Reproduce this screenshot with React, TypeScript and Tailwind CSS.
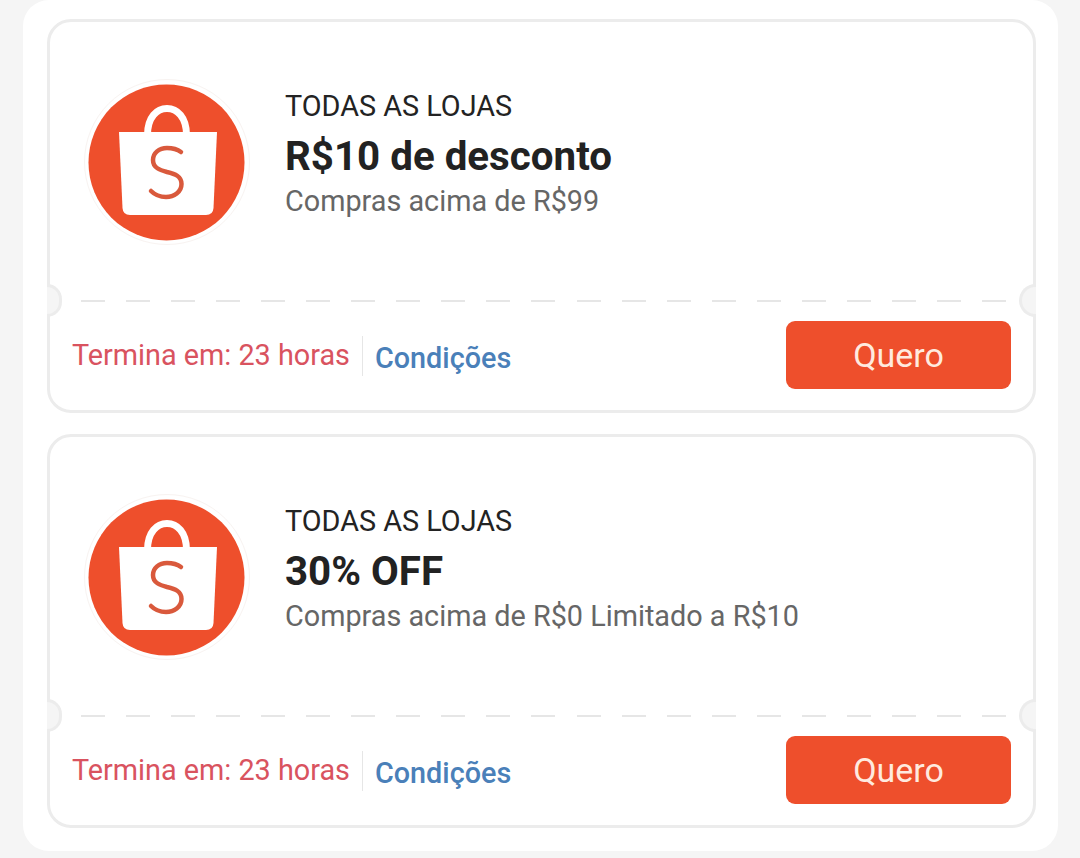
import React from 'react';

const font = { fontFamily: 'Roboto, sans-serif' };

const ShopLogo = () => (
  <svg width="168" height="168" viewBox="0 0 168 168" className="shrink-0">
    <circle cx="84" cy="84" r="82.5" fill="#fff" stroke="#f8f3f1" strokeWidth="1" />
    <circle cx="83.5" cy="84.5" r="78" fill="#ee4f2c" />
    <path d="M64.5 57 C64.5 39 74 30.5 84 30.5 C94 30.5 103.5 39 103.5 57" fill="none" stroke="#fff" strokeWidth="7" />
    <path d="M36 54 H134 L130.5 130 Q130 137 123 137 H47 Q40 137 39.5 130 Z" fill="#fff" />
    <path
      d="M98 74 C94 71 89 70 84 70 C76 70 70 75 70 82 C70 90 77 92 84 94 C92 96 98.5 98 98.5 106 C98.5 114 91 119 83 119 C77 119 72 117 68 113"
      fill="none"
      stroke="#d9593c"
      strokeWidth="4.5"
      strokeLinecap="round"
    />
  </svg>
);

const Coupon = ({ title, sub }: { title: string; sub: string }) => (
  <div className="relative h-[394px] w-[989px] rounded-[24px] border-[3px] border-[#ececec] bg-white">
    {/* notches */}
    <div className="absolute left-[-3px] top-[262px] h-[33px] w-[15px] rounded-r-full border-[3px] border-l-0 border-[#ececec] bg-[#f5f5f5]" />
    <div className="absolute right-[-3px] top-[262px] h-[33px] w-[17px] rounded-l-full border-[3px] border-r-0 border-[#ececec] bg-[#f5f5f5]" />

    <div className="flex h-[278px] items-start pl-[33px] pt-[56px]">
      <ShopLogo />
      <div className="ml-[34px] flex flex-col pt-[11px]">
        <div className="text-[28.8px] leading-[34px] text-[#232323]">TODAS AS LOJAS</div>
        <div className="mt-[12px] text-[40.3px] font-bold leading-[44px] text-[#222222]">{title}</div>
        <div className="mt-[5px] text-[28.8px] leading-[34px] text-[#666666]">{sub}</div>
      </div>
    </div>

    {/* dashed separator */}
    <div className="ml-[31px] mr-[27px] flex justify-between">
      {Array.from({ length: 21 }).map((_, i) => (
        <div key={i} className="h-[2px] w-[24px] bg-[#e6e6e6]" />
      ))}
    </div>

    <div className="flex items-center pl-[22px] pr-[22px] pt-[19px]">
      <span className="text-[28.8px] leading-[34px] text-[#d9535f]">Termina em: 23 horas</span>
      <div className="ml-[12px] mt-[2px] h-[40px] w-[1px] bg-[#e6e6e6]" />
      <span className="ml-[12px] mt-[5px] text-[28.8px] font-medium leading-[34px] text-[#4a80b9]">Condições</span>
      <button className="ml-auto flex h-[68px] w-[225px] items-center justify-center rounded-[9px] bg-[#ee4f2c] text-[34px] text-[#ffeadf]">
        Quero
      </button>
    </div>
  </div>
);

export default function App() {
  return (
    <div className="h-[858px] w-[1080px] overflow-hidden bg-[#f5f5f5]" style={font}>
      <div className="ml-[23px] flex h-[851px] w-[1035px] flex-col items-start gap-[21px] rounded-[26px] bg-white pl-[24px] pt-[19px]">
        <Coupon title="R$10 de desconto" sub="Compras acima de R$99" />
        <Coupon title="30% OFF" sub="Compras acima de R$0 Limitado a R$10" />
      </div>
    </div>
  );
}
